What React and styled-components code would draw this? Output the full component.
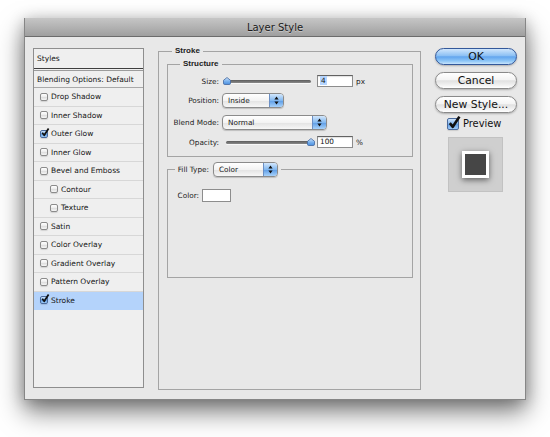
import React from "react"
import styled, { createGlobalStyle } from "styled-components"

const GlobalStyle = createGlobalStyle`
  html, body {
    margin: 0;
    padding: 0;
    background: #ffffff;
  }
  body {
    font-family: "DejaVu Sans", "Liberation Sans", sans-serif;
    color: #141414;
  }
`

const Page = styled.div`
  width: 550px;
  height: 437px;
  box-sizing: border-box;
  padding: 18px 0 0 24px;
  overflow: hidden;
`

const Window = styled.div`
  width: 502px;
  height: 382px;
  box-sizing: border-box;
  border: 1px solid #868686;
  border-top: none;
  background: #e8e8e8;
  box-shadow: 0 12px 24px rgba(0, 0, 0, 0.5), 0 2px 14px rgba(0, 0, 0, 0.22);
  display: flex;
  flex-direction: column;
`

const TitleBar = styled.div`
  height: 18px;
  flex: none;
  border-bottom: 1px solid #6c6c6c;
  background: linear-gradient(#c6c6c6, #9f9f9f);
  display: flex;
  align-items: center;
  justify-content: center;
  font-size: 10px;
  color: #1a1a1a;
  text-shadow: 0 1px 0 rgba(255, 255, 255, 0.35);
`

const Body = styled.div`
  flex: 1;
  display: flex;
  align-items: flex-start;
  padding: 9px 8px 0 8px;
`

/* left list */

const StylesList = styled.div`
  width: 111px;
  height: 340px;
  margin-top: 2px;
  flex: none;
  box-sizing: border-box;
  border: 1px solid #8e8e8e;
  background: #efefef;
  font-size: 7.5px;
  color: #161616;
`

const ListHeader = styled.div`
  height: 19px;
  line-height: 19px;
  padding-left: 3px;
  border-bottom: 1px solid #3e3e3e;
`

const BlendRow = styled.div`
  height: 18px;
  box-sizing: border-box;
  margin-top: 1px;
  border-top: 1px solid #9c9c9c;
  border-bottom: 1px solid #a9a9a9;
  padding-left: 3px;
  display: flex;
  align-items: center;
`

const ListRow = styled.div`
  height: 18.5px;
  box-sizing: border-box;
  border-bottom: 1px solid ${p => (p.$selected ? "#b4d3fb" : "#d7d7d7")};
  background: ${p => (p.$selected ? "#b4d3fb" : "transparent")};
  padding-left: ${p => (p.$indent ? 16 : 6)}px;
  display: flex;
  align-items: center;
`

const Box = styled.span`
  position: relative;
  flex: none;
  width: ${p => p.$size}px;
  height: ${p => p.$size}px;
  box-sizing: border-box;
  border: 1px solid ${p => (p.$on ? "#4a6a9c" : "#8b8b8b")};
  border-radius: 2px;
  margin-right: ${p => p.$gap}px;
  background: ${p =>
    p.$on
      ? "linear-gradient(#cfe4fb, #7fb4ee 50%, #5d9be4 51%, #9fcbf7)"
      : "linear-gradient(#ffffff, #ececec 50%, #dcdcdc 51%, #f6f6f6)"};
  box-shadow: 0 1px 1px rgba(0, 0, 0, 0.12);
`

const Tick = styled.svg`
  position: absolute;
  left: 0;
  top: -3px;
  overflow: visible;
`

const Checkbox = ({ on, size = 8, gap = 3 }) => (
  <Box $on={on} $size={size} $gap={gap}>
    {on && (
      <Tick width={size} height={size} viewBox="0 0 10 10">
        <path d="M1.5 6 L4 9 L9.5 0.5" fill="none" stroke="#111" strokeWidth="2.2" strokeLinejoin="round" />
      </Tick>
    )}
  </Box>
)

/* main fieldsets */

const Group = styled.fieldset`
  margin: ${p => p.$margin || 0};
  padding: ${p => p.$pad};
  width: ${p => p.$w}px;
  height: ${p => p.$h}px;
  box-sizing: border-box;
  border: 1px solid #a4a4a4;
  min-width: 0;
  flex: none;
`

const Legend = styled.legend`
  margin-left: ${p => p.$ml}px;
  padding: 0 3px;
  font: bold 8px "Liberation Sans", Arial, sans-serif;
  line-height: 10px;
  color: #1c1c1c;
`

const FillLegend = styled.legend`
  margin-left: -1px;
  padding: 0 3px 0 2px;
  display: flex;
  align-items: center;
  height: 15px;
`

const Row = styled.div`
  display: flex;
  align-items: center;
  height: ${p => p.$h}px;
  margin-top: ${p => p.$mt}px;
`

const Label = styled.span`
  width: ${p => (p.$w !== undefined ? p.$w : 51)}px;
  margin-right: ${p => (p.$mr !== undefined ? p.$mr : 3)}px;
  text-align: right;
  font-size: 7.3px;
  color: #1c1c1c;
  white-space: nowrap;
  flex: none;
`

const Unit = styled.span`
  margin-left: 3px;
  font-size: 7.3px;
  color: #1c1c1c;
`

const SliderBox = styled.div`
  position: relative;
  width: 92px;
  height: 12px;
  flex: none;
`

const Track = styled.div`
  position: absolute;
  left: 4px;
  right: 3px;
  top: 5px;
  height: 3px;
  border-radius: 2px;
  background: linear-gradient(#5c5c5c, #8a8a8a);
  box-shadow: 0 1px 0 rgba(255, 255, 255, 0.7);
`

const Thumb = styled.svg`
  position: absolute;
  top: 2px;
  left: ${p => p.$left}px;
`

const Slider = ({ at }) => (
  <SliderBox>
    <Track />
    <Thumb $left={at} width="8" height="8" viewBox="0 0 8 8">
      <defs>
        <linearGradient id={`knob${at}`} x1="0" y1="0" x2="0" y2="1">
          <stop offset="0" stopColor="#d8eafc" />
          <stop offset="0.5" stopColor="#7db4ef" />
          <stop offset="1" stopColor="#4a8fdf" />
        </linearGradient>
      </defs>
      <path
        d="M4 0.5 L7.5 3.3 V6.2 A1.3 1.3 0 0 1 6.2 7.5 H1.8 A1.3 1.3 0 0 1 0.5 6.2 V3.3 Z"
        fill={`url(#knob${at})`}
        stroke="#42679e"
        strokeWidth="0.8"
      />
    </Thumb>
  </SliderBox>
)

const Field = styled.div`
  width: 36px;
  height: 12px;
  margin-left: 3px;
  box-sizing: border-box;
  border: 1px solid #8c8c8c;
  border-top-color: #626262;
  background: #ffffff;
  box-shadow: inset 0 1px 1px rgba(0, 0, 0, 0.12);
  padding-left: 2px;
  font-size: 7.3px;
  line-height: 10px;
  flex: none;
`

const Selected = styled.span`
  background: #b5d5ff;
  padding: 0 1px;
`

const SelectBox = styled.div`
  width: ${p => p.$w}px;
  height: 15px;
  box-sizing: border-box;
  flex: none;
  border: 1px solid #8b8b8b;
  border-radius: 4px;
  overflow: hidden;
  display: flex;
  background: linear-gradient(#ffffff, #f3f3f3 50%, #e2e2e2 51%, #f7f7f7);
  box-shadow: 0 1px 1px rgba(0, 0, 0, 0.18);
`

const SelectText = styled.span`
  flex: 1;
  padding-left: 5px;
  font-size: 7.3px;
  line-height: 13px;
  color: #1c1c1c;
`

const SelectArrows = styled.span`
  width: 13px;
  flex: none;
  border-left: 1px solid #6b8fc4;
  background: linear-gradient(#d3e7fc, #82b8f0 50%, #5b9be5 51%, #a8d2fa);
  display: flex;
  align-items: center;
  justify-content: center;
`

const Select = ({ w, children }) => (
  <SelectBox $w={w}>
    <SelectText>{children}</SelectText>
    <SelectArrows>
      <svg width="5" height="9" viewBox="0 0 5 9">
        <path d="M2.5 0.5 L4.6 3.4 H0.4 Z M2.5 8.5 L4.6 5.6 H0.4 Z" fill="#111" />
      </svg>
    </SelectArrows>
  </SelectBox>
)

const Swatch = styled.div`
  width: 29px;
  height: 13px;
  box-sizing: border-box;
  border: 1px solid #8d8d8d;
  background: #ffffff;
`

/* right column */

const Side = styled.div`
  width: 82px;
  margin: 2px 0 0 14px;
  flex: none;
  display: flex;
  flex-direction: column;
`

const Button = styled.div`
  height: 17px;
  box-sizing: border-box;
  margin-bottom: 7px;
  border-radius: 9px;
  border: 1px solid ${p => (p.$primary ? "#33589a" : "#8a8a8a")};
  background: ${p =>
    p.$primary
      ? "linear-gradient(#d0e6fc, #8cc0f4 45%, #62a5ee 52%, #8ec6f7 80%, #c6e4fd)"
      : "linear-gradient(#ffffff, #f4f4f4 45%, #e1e1e1 52%, #f1f1f1 80%, #ffffff)"};
  box-shadow: 0 1px 2px rgba(0, 0, 0, 0.25);
  display: flex;
  align-items: center;
  justify-content: center;
  font-size: 10.8px;
  color: #111;
`

const PreviewToggle = styled.div`
  display: flex;
  align-items: center;
  height: 13px;
  margin: -3px 0 0 12px;
  font-size: 9.9px;
  color: #111;
`

const PreviewBox = styled.div`
  width: 55px;
  height: 55px;
  margin: 7px 0 0 13px;
  box-sizing: border-box;
  border: 1px solid #c2c2c2;
  background: #cfcfcf;
  display: flex;
  align-items: center;
  justify-content: center;
`

const PreviewSwatch = styled.div`
  width: 27px;
  height: 27px;
  box-sizing: border-box;
  border: 3px solid #ffffff;
  background: #464646;
  box-shadow: 0 2px 6px rgba(0, 0, 0, 0.55);
`

const effects = [
  { name: "Drop Shadow" },
  { name: "Inner Shadow" },
  { name: "Outer Glow", on: true },
  { name: "Inner Glow" },
  { name: "Bevel and Emboss" },
  { name: "Contour", indent: true },
  { name: "Texture", indent: true },
  { name: "Satin" },
  { name: "Color Overlay" },
  { name: "Gradient Overlay" },
  { name: "Pattern Overlay" },
  { name: "Stroke", on: true, selected: true },
]

const App = () => (
  <Page>
    <GlobalStyle />
    <Window>
      <TitleBar>Layer Style</TitleBar>
      <Body>
        <StylesList>
          <ListHeader>Styles</ListHeader>
          <BlendRow>Blending Options: Default</BlendRow>
          {effects.map(e => (
            <ListRow key={e.name} $indent={e.indent} $selected={e.selected}>
              <Checkbox on={e.on} />
              {e.name}
            </ListRow>
          ))}
        </StylesList>

        <Group $w={263} $h={344} $pad="3px 8px 0 8px" $margin="0 0 0 14px">
          <Legend $ml={5}>Stroke</Legend>
          <Group $w={246} $h={98} $pad="0 0 0 0">
            <Legend $ml={12}>Structure</Legend>
            <Row $h={12} $mt={6}>
              <Label>Size:</Label>
              <Slider at={1} />
              <Field>
                <Selected>4</Selected>
              </Field>
              <Unit>px</Unit>
            </Row>
            <Row $h={16} $mt={5}>
              <Label>Position:</Label>
              <Select w={62}>Inside</Select>
            </Row>
            <Row $h={16} $mt={6}>
              <Label>Blend Mode:</Label>
              <Select w={105}>Normal</Select>
            </Row>
            <Row $h={12} $mt={6}>
              <Label>Opacity:</Label>
              <Slider at={85} />
              <Field>100</Field>
              <Unit>%</Unit>
            </Row>
          </Group>
          <Group $w={246} $h={116} $pad="0 0 0 8px" $margin="5px 0 0 0">
            <FillLegend>
              <Label $w={32} $mr={4}>Fill Type:</Label>
              <Select w={65}>Color</Select>
            </FillLegend>
            <Row $h={13} $mt={12}>
              <Label $w={23} $mr={3}>Color:</Label>
              <Swatch />
            </Row>
          </Group>
        </Group>

        <Side>
          <Button $primary>OK</Button>
          <Button>Cancel</Button>
          <Button>New Style...</Button>
          <PreviewToggle>
            <Checkbox on size={12} gap={4} />
            Preview
          </PreviewToggle>
          <PreviewBox>
            <PreviewSwatch />
          </PreviewBox>
        </Side>
      </Body>
    </Window>
  </Page>
)

export default App
